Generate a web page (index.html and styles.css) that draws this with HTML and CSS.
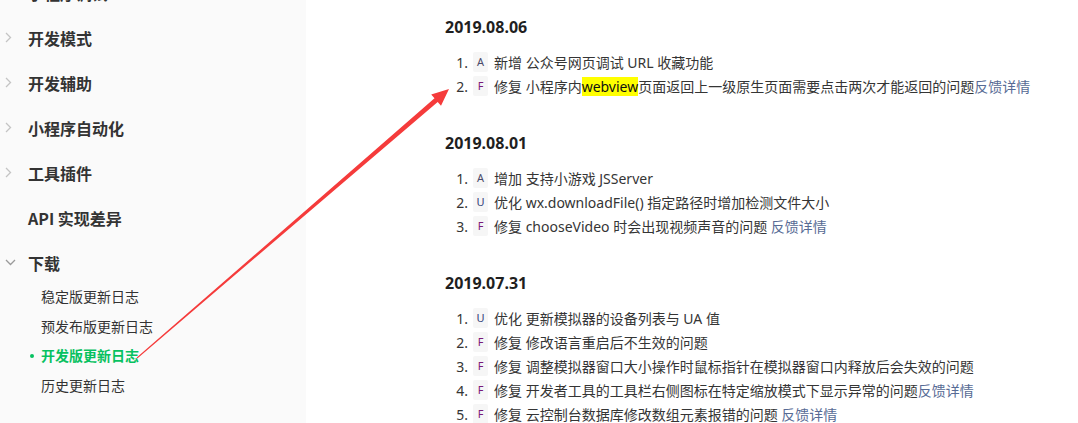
FILE: index.html
```html
<!DOCTYPE html>
<html lang="zh-CN">
<head>
<meta charset="utf-8">
<title>开发版更新日志</title>
<link rel="stylesheet" href="styles.css">
</head>
<body>
<div class="page">
  <aside class="sidebar">
    <ul class="nav">
      <li class="nav-item"><span class="chev"></span><span class="nav-text">小程序调试</span></li>
      <li class="nav-item"><span class="chev"><svg width="7" height="11" viewBox="0 0 7 11"><path d="M1 1l4.5 4.5L1 10" fill="none" stroke="#c4c4c4" stroke-width="1.3"/></svg></span><span class="nav-text">开发模式</span></li>
      <li class="nav-item"><span class="chev"><svg width="7" height="11" viewBox="0 0 7 11"><path d="M1 1l4.5 4.5L1 10" fill="none" stroke="#c4c4c4" stroke-width="1.3"/></svg></span><span class="nav-text">开发辅助</span></li>
      <li class="nav-item"><span class="chev"><svg width="7" height="11" viewBox="0 0 7 11"><path d="M1 1l4.5 4.5L1 10" fill="none" stroke="#c4c4c4" stroke-width="1.3"/></svg></span><span class="nav-text">小程序自动化</span></li>
      <li class="nav-item"><span class="chev"><svg width="7" height="11" viewBox="0 0 7 11"><path d="M1 1l4.5 4.5L1 10" fill="none" stroke="#c4c4c4" stroke-width="1.3"/></svg></span><span class="nav-text">工具插件</span></li>
      <li class="nav-item"><span class="chev"></span><span class="nav-text">API 实现差异</span></li>
      <li class="nav-item"><span class="chev"><svg width="11" height="7" viewBox="0 0 11 7"><path d="M1 1l4.5 4.5L10 1" fill="none" stroke="#9a9a9a" stroke-width="1.3"/></svg></span><span class="nav-text">下载</span></li>
    </ul>
    <ul class="subnav">
      <li class="sub-item">稳定版更新日志</li>
      <li class="sub-item">预发布版更新日志</li>
      <li class="sub-item active">开发版更新日志</li>
      <li class="sub-item">历史更新日志</li>
    </ul>
  </aside>
  <main class="content">
    <section class="release">
      <h2 class="date">2019.08.06</h2>
      <ol class="changes">
        <li><span class="badge b-a">A</span><span class="txt">新增 公众号网页调试 URL 收藏功能</span></li>
        <li><span class="badge b-f">F</span><span class="txt">修复 小程序内<mark class="hl">webview</mark>页面返回上一级原生页面需要点击两次才能返回的问题<a class="link">反馈详情</a></span></li>
      </ol>
    </section>
    <section class="release">
      <h2 class="date">2019.08.01</h2>
      <ol class="changes">
        <li><span class="badge b-a">A</span><span class="txt">增加 支持小游戏 JSServer</span></li>
        <li><span class="badge b-u">U</span><span class="txt">优化 wx.downloadFile() 指定路径时增加检测文件大小</span></li>
        <li><span class="badge b-f">F</span><span class="txt">修复 chooseVideo 时会出现视频声音的问题 <a class="link">反馈详情</a></span></li>
      </ol>
    </section>
    <section class="release">
      <h2 class="date">2019.07.31</h2>
      <ol class="changes">
        <li><span class="badge b-u">U</span><span class="txt">优化 更新模拟器的设备列表与 UA 值</span></li>
        <li><span class="badge b-f">F</span><span class="txt">修复 修改语言重启后不生效的问题</span></li>
        <li><span class="badge b-f">F</span><span class="txt">修复 调整模拟器窗口大小操作时鼠标指针在模拟器窗口内释放后会失效的问题</span></li>
        <li><span class="badge b-f">F</span><span class="txt">修复 开发者工具的工具栏右侧图标在特定缩放模式下显示异常的问题<a class="link">反馈详情</a></span></li>
        <li><span class="badge b-f">F</span><span class="txt">修复 云控制台数据库修改数组元素报错的问题 <a class="link">反馈详情</a></span></li>
      </ol>
    </section>
  </main>
  <svg class="arrow" width="1078" height="423" viewBox="0 0 1078 423">
    <polygon fill="#f53b3b" points="136.7,357.6 434.5,98.2 431.2,94.4 449,89 441.0,105.8 437.7,102.0 137.3,358.4"/>
  </svg>
</div>
</body>
</html>
```
FILE: styles.css
```css
html, body {
  margin: 0;
  padding: 0;
  background: #fff;
}
body {
  font-family: "Noto Sans", "Noto Sans CJK SC", sans-serif;
  color: #353535;
  overflow: hidden;
}
.page {
  position: relative;
  display: flex;
  width: 1078px;
  height: 423px;
  overflow: hidden;
}
.sidebar {
  width: 306px;
  flex: none;
  background: #fafafa;
  height: 423px;
}
.nav {
  list-style: none;
  margin: -30px 0 0 0;
  padding: 0;
}
.nav-item {
  height: 45px;
  display: flex;
  align-items: center;
  font-family: "Noto Sans CJK SC", sans-serif;
  font-size: 16px;
  font-weight: 700;
  color: #333;
}
.chev {
  width: 28px;
  flex: none;
  display: flex;
  align-items: center;
  padding-left: 5px;
  box-sizing: border-box;
}
.chev svg { display: block; }
.subnav {
  list-style: none;
  margin: -3px 0 0 0;
  padding: 0;
}
.sub-item {
  position: relative;
  height: 29.6px;
  line-height: 29.6px;
  padding-left: 41px;
  font-family: "Noto Sans CJK SC", sans-serif;
  font-size: 14px;
  color: #333;
}
.sub-item.active {
  color: #07c160;
  font-weight: 700;
}
.sub-item.active::before {
  content: "";
  position: absolute;
  left: 30px;
  top: 13px;
  width: 4px;
  height: 4px;
  border-radius: 50%;
  background: #07c160;
}
.content {
  flex: 1;
  padding: 16px 0 0 139px;
}
.release {
  margin-bottom: 34px;
}
.date {
  margin: 0;
  height: 22px;
  line-height: 22px;
  font-size: 16px;
  font-weight: 700;
  color: #1f1f1f;
}
.changes {
  list-style: none;
  margin: 12px 0 0 0;
  padding: 0;
  counter-reset: item;
}
.changes li {
  counter-increment: item;
  display: flex;
  align-items: center;
  height: 24px;
  font-size: 14px;
  white-space: nowrap;
}
.changes li::before {
  content: counter(item) ".";
  width: 23px;
  text-align: right;
  flex: none;
  color: #353535;
}
.badge {
  flex: none;
  margin-left: 5px;
  width: 15px;
  height: 20px;
  line-height: 20px;
  text-align: center;
  background: #f6f6f6;
  font-size: 11px;
  border-radius: 2px;
}
.b-a { color: #4b4b6b; }
.b-u { color: #33407a; }
.b-f { color: #7a1a78; }
.txt {
  margin-left: 6px;
}
.hl {
  background: #ffff00;
  color: #111;
  padding: 0;
}
.link {
  color: #576b95;
  text-decoration: none;
}
.arrow {
  position: absolute;
  left: 0;
  top: 0;
  pointer-events: none;
}
```
